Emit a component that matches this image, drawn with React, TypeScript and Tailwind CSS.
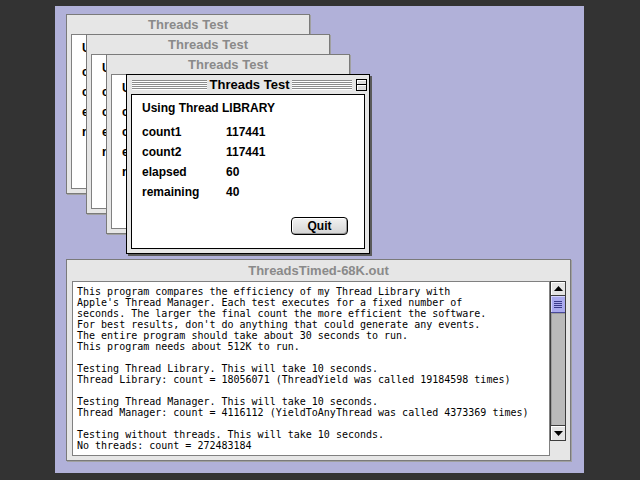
import React, { FC } from 'react'

const outputLines = [
  'This program compares the efficiency of my Thread Library with',
  "Apple's Thread Manager. Each test executes for a fixed number of",
  'seconds. The larger the final count the more efficient the software.',
  "For best results, don't do anything that could generate any events.",
  'The entire program should take about 30 seconds to run.',
  'This program needs about 512K to run.',
  '',
  'Testing Thread Library. This will take 10 seconds.',
  'Thread Library: count = 18056071 (ThreadYield was called 19184598 times)',
  '',
  'Testing Thread Manager. This will take 10 seconds.',
  'Thread Manager: count = 4116112 (YieldToAnyThread was called 4373369 times)',
  '',
  'Testing without threads. This will take 10 seconds.',
  'No threads: count = 272483184',
]

const rows = [
  ['count1', '117441'],
  ['count2', '117441'],
  ['elapsed', '60'],
  ['remaining', '40'],
]

const Stripes = () => (
  <div className="flex flex-1 flex-col gap-px">
    {[0, 1, 2, 3, 4].map((i) => (
      <div key={i} className="h-px bg-[#8c8c8c] shadow-[0_1px_0_#ffffff]" />
    ))}
  </div>
)

const CollapseBox = () => (
  <div className="flex h-[12px] w-[11px] flex-col border border-black bg-[#dcdcdc]">
    <div className="flex-1 border-b border-black shadow-[inset_1px_1px_0_#fff]" />
    <div className="flex-1 shadow-[inset_1px_1px_0_#fff]" />
  </div>
)

type TitleProps = { title: string; active?: boolean; tall?: boolean }

const TitleBar: FC<TitleProps> = ({ title, active, tall }) => {
  if (!active) {
    return (
      <div className={`flex ${tall ? 'h-[21px]' : 'h-[19px]'} shrink-0 items-center justify-center text-[13px] font-bold text-[#8a8a8a]`}>
        {title}
      </div>
    )
  }
  return (
    <div className="grid h-[19px] shrink-0 grid-cols-[1fr_auto_1fr] items-center gap-[3px] pl-[5px] pr-[2px]">
      <Stripes />
      <span className="text-[13px] font-bold leading-none text-black">{title}</span>
      <div className="flex items-center gap-[4px]">
        <Stripes />
        <CollapseBox />
      </div>
    </div>
  )
}

type WinProps = { active?: boolean; pos: string }

const ThreadsWindow: FC<WinProps> = ({ active, pos }) => (
  <div
    className={`absolute ${pos} flex h-[180px] w-[244px] flex-col border bg-[#e6e6e6] ${
      active ? 'border-black shadow-[2px_2px_0_#5a5a5a]' : 'border-[#7a7a7a] shadow-[1px_1px_0_#a0a0a0]'
    }`}
  >
    <TitleBar title="Threads Test" active={active} />
    <div className="flex flex-1 px-[4px] pb-[4px]">
      <div
        className={`flex flex-1 flex-col overflow-hidden border bg-white pl-[10px] pt-[3px] text-[12px] font-bold text-black ${
          active ? 'border-black' : 'border-[#808080]'
        }`}
      >
        <div className="h-[20px] leading-[20px] whitespace-nowrap">Using Thread LIBRARY</div>
        <div className="mt-[4px]">
          {rows.map(([label, value]) => (
            <div key={label} className="flex h-[20px] items-center whitespace-nowrap">
              <span className="w-[84px]">{label}</span>
              <span>{value}</span>
            </div>
          ))}
        </div>
        <div className="mt-[15px] flex justify-end pr-[16px]">
          <button className="flex h-[18px] w-[57px] items-center justify-center rounded-[4px] border border-black bg-gradient-to-b from-[#f2f2f2] to-[#d4d4d4] text-[12px] font-bold text-black shadow-[inset_-1px_-1px_0_#9a9a9a,inset_1px_1px_0_#ffffff]">
            Quit
          </button>
        </div>
      </div>
    </div>
  </div>
)

const Arrow = ({ down }: { down?: boolean }) => (
  <svg width="9" height="5" viewBox="0 0 9 5">
    {down ? <polygon points="0,0 9,0 4.5,5" fill="#000" /> : <polygon points="0,5 9,5 4.5,0" fill="#000" />}
  </svg>
)

const ScrollBar = () => (
  <div className="flex h-[160px] w-[16px] shrink-0 flex-col self-start border border-[#3c3c3c] bg-[#bababa]">
    <div className="flex h-[14px] items-center justify-center border-b border-[#3c3c3c] bg-[#e4e4e4] shadow-[inset_1px_1px_0_#fff]">
      <Arrow />
    </div>
    <div className="flex h-[17px] flex-col items-center justify-center gap-px border-b border-[#4a4a9a] bg-[#aaaaee] shadow-[inset_1px_1px_0_#d4d4ff]">
      {[0, 1, 2, 3].map((i) => (
        <div key={i} className="h-px w-[8px] bg-[#3a3a8a]" />
      ))}
    </div>
    <div className="flex-1 shadow-[inset_1px_1px_0_#9c9c9c]" />
    <div className="flex h-[15px] items-center justify-center border-t border-[#3c3c3c] bg-[#e4e4e4] shadow-[inset_1px_1px_0_#fff]">
      <Arrow down />
    </div>
  </div>
)

const OutputWindow = () => (
  <div className="absolute left-[11px] top-[253px] flex h-[202px] w-[505px] flex-col border border-[#7a7a7a] bg-[#e6e6e6] shadow-[1px_1px_0_#a0a0a0]">
    <TitleBar title="ThreadsTimed-68K.out" tall />
    <div className="flex flex-1 pb-[4px] pl-[5px] pr-[4px]">
      <pre className="flex-1 overflow-hidden border border-[#808080] bg-white pl-[4px] pt-[4px] font-['DejaVu_Sans_Mono',monospace] text-[10px] leading-[11px] text-black">
        {outputLines.join('\n')}
      </pre>
      <ScrollBar />
    </div>
  </div>
)

export default function App() {
  return (
    <div className="h-[480px] w-[640px] overflow-hidden bg-[#333333] pl-[55px] pt-[6px] font-['Liberation_Sans',Arial,sans-serif]">
      <div className="relative h-[467px] w-[529px] bg-[#b1b1d9]">
        <ThreadsWindow pos="left-[11px] top-[8px]" />
        <ThreadsWindow pos="left-[31px] top-[28px]" />
        <ThreadsWindow pos="left-[51px] top-[48px]" />
        <ThreadsWindow pos="left-[71px] top-[68px]" active />
        <OutputWindow />
      </div>
    </div>
  )
}
